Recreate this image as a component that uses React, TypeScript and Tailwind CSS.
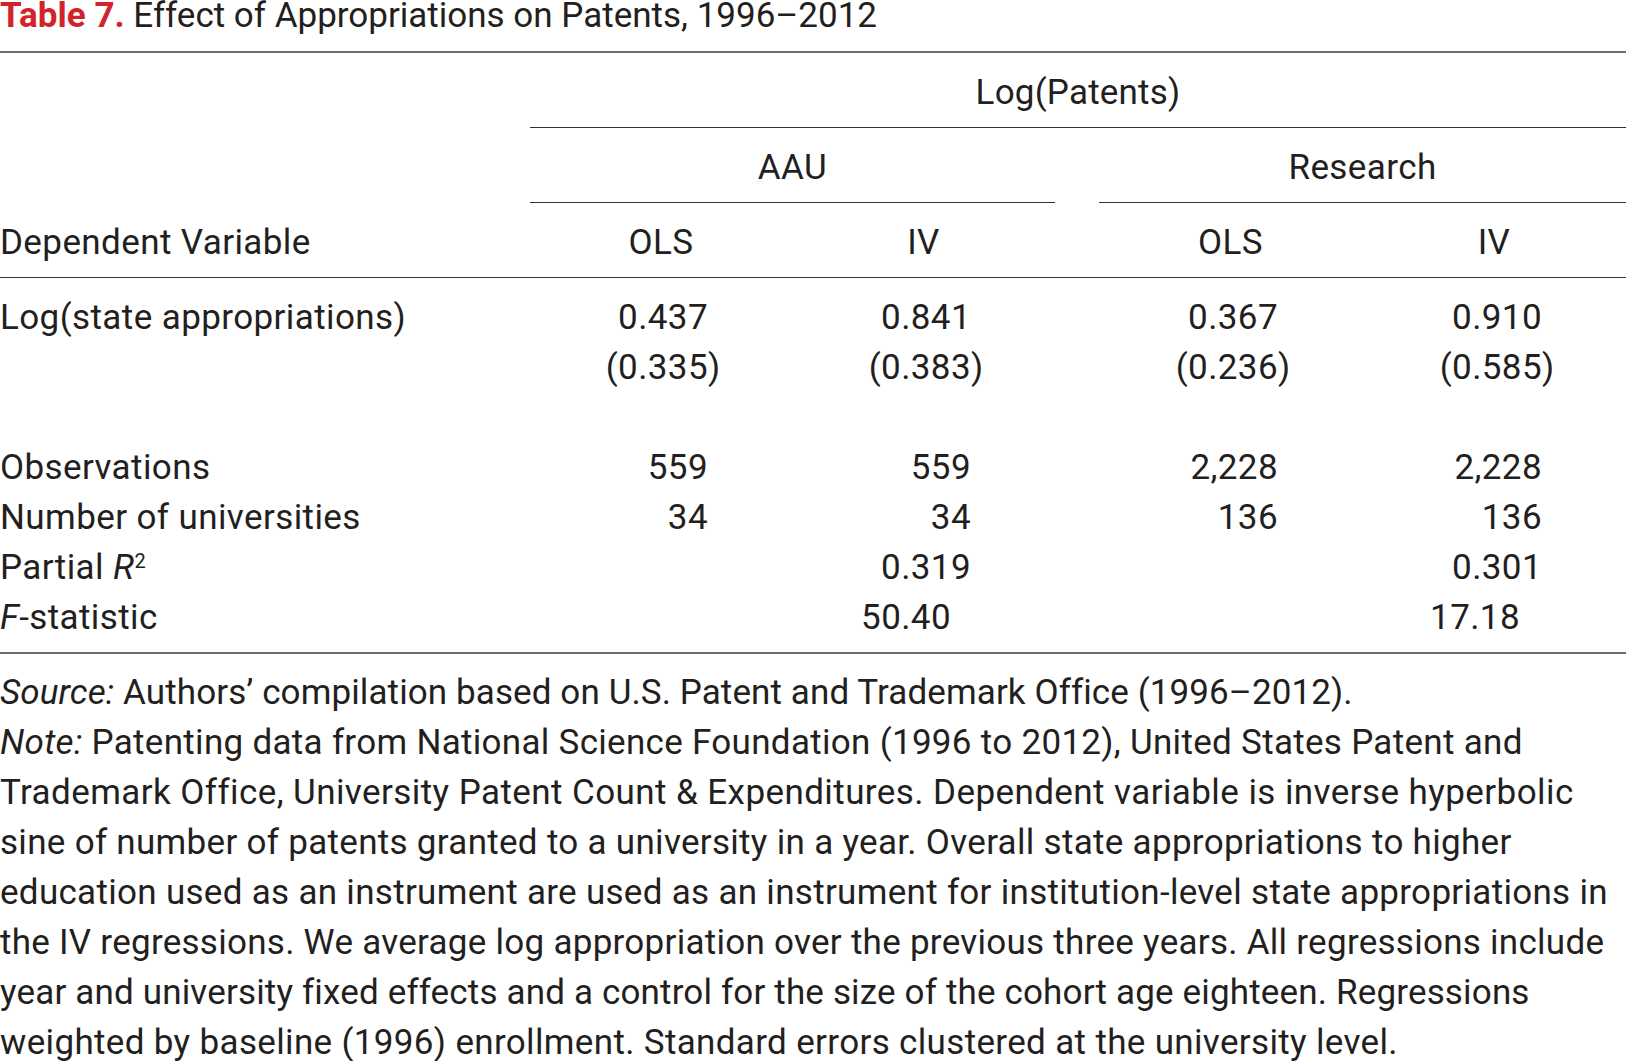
const GRID = 'grid grid-cols-[530px_262px_263px_44px_263px_264px]'
const NUM = 'text-right pr-[84px] whitespace-nowrap'

type Row = { label: React.ReactNode; cells: React.ReactNode[]; pr?: string[] }

function Paren({ v }: { v: string }) {
  return (
    <>
      ({v}<span className="inline-block w-0">)</span>
    </>
  )
}

const ROWS: Row[] = [
  { label: 'Log(state appropriations)', cells: ['0.437', '0.841', '', '0.367', '0.910'] },
  { label: '', cells: [<Paren v="0.335" />, <Paren v="0.383" />, '', <Paren v="0.236" />, <Paren v="0.585" />] },
  { label: '', cells: ['', '', '', '', ''] },
  { label: 'Observations', cells: ['559', '559', '', '2,228', '2,228'] },
  { label: 'Number of universities', cells: ['34', '34', '', '136', '136'] },
  {
    label: <>Partial <i>R</i><span className="text-[20px] leading-none align-[11px]">2</span></>,
    cells: ['', '0.319', '', '', '0.301'],
  },
  {
    label: <><i>F</i>-statistic</>,
    cells: ['', '50.40', '', '', '17.18'],
    pr: ['', 'pr-[104px]', '', '', 'pr-[106px]'],
  },
]

// line breaks as printed; tracking nudged per line to keep the same widths
const NOTE_LINES: [string, string][] = [
  ['Patenting data from National Science Foundation (1996 to 2012), United States Patent and', 'tracking-[0.3px]'],
  ['Trademark Office, University Patent Count & Expenditures. Dependent variable is inverse hyperbolic', 'tracking-[0.42px]'],
  ['sine of number of patents granted to a university in a year. Overall state appropriations to higher', 'tracking-[0.3px]'],
  ['education used as an instrument are used as an instrument for institution-level state appropriations in', 'tracking-[0.3px]'],
  ['the IV regressions. We average log appropriation over the previous three years. All regressions include', 'tracking-[0.27px]'],
  ['year and university fixed effects and a control for the size of the cohort age eighteen. Regressions', 'tracking-[0.16px]'],
  ['weighted by baseline (1996) enrollment. Standard errors clustered at the university level.', 'tracking-[0.34px]'],
]

export default function App() {
  return (
    <div className="w-[1626px] h-[1061px] overflow-hidden bg-white text-[#231f20] text-[35px] leading-[50px] tracking-[0.4px] font-['Roboto',sans-serif]">
      {/* Title */}
      <div className="leading-[30px] pt-[1px] mb-[20px] whitespace-nowrap tracking-normal">
        <span className="font-bold text-[#d2232a]">Table 7.</span> Effect of Appropriations on Patents, 1996–2012
      </div>

      {/* Header */}
      <div className="border-t-2 border-[#6d6e71]">
        <div className={GRID}>
          <div />
          <div className="col-span-5 text-center pt-[15px] pb-[9px] border-b border-[#333] tracking-[0.2px]">Log(Patents)</div>
        </div>
        <div className={GRID}>
          <div />
          <div className="col-span-2 text-center pt-[15px] pb-[9px] border-b border-[#333]">AAU</div>
          <div />
          <div className="col-span-2 text-center pt-[15px] pb-[9px] border-b border-[#333]">Research</div>
        </div>
        <div className={`${GRID} pt-[15px] pb-[9px] border-b border-[#333]`}>
          <div>Dependent Variable</div>
          <div className="text-center">OLS</div>
          <div className="text-center">IV</div>
          <div />
          <div className="text-center">OLS</div>
          <div className="text-center">IV</div>
        </div>
      </div>

      {/* Body */}
      <div className="pt-[15px] pb-[9px] border-b-2 border-[#6d6e71]">
        {ROWS.map((r, i) => (
          <div key={i} className={`${GRID} h-[50px]`}>
            <div className="whitespace-nowrap">{r.label}</div>
            {r.cells.map((c, j) => (
              <div key={j} className={`${NUM} ${r.pr?.[j] ?? ''}`}>{c}</div>
            ))}
          </div>
        ))}
      </div>

      {/* Notes */}
      <div className="pt-[14px] whitespace-nowrap">
        <div className="tracking-[0.1px]"><i>Source:</i> Authors’ compilation based on U.S. Patent and Trademark Office (1996–2012).</div>
        {NOTE_LINES.map(([l, t], i) => (
          <div key={i} className={t}>
            {i === 0 && <><i>Note:</i> </>}
            {l}
          </div>
        ))}
      </div>
    </div>
  )
}
